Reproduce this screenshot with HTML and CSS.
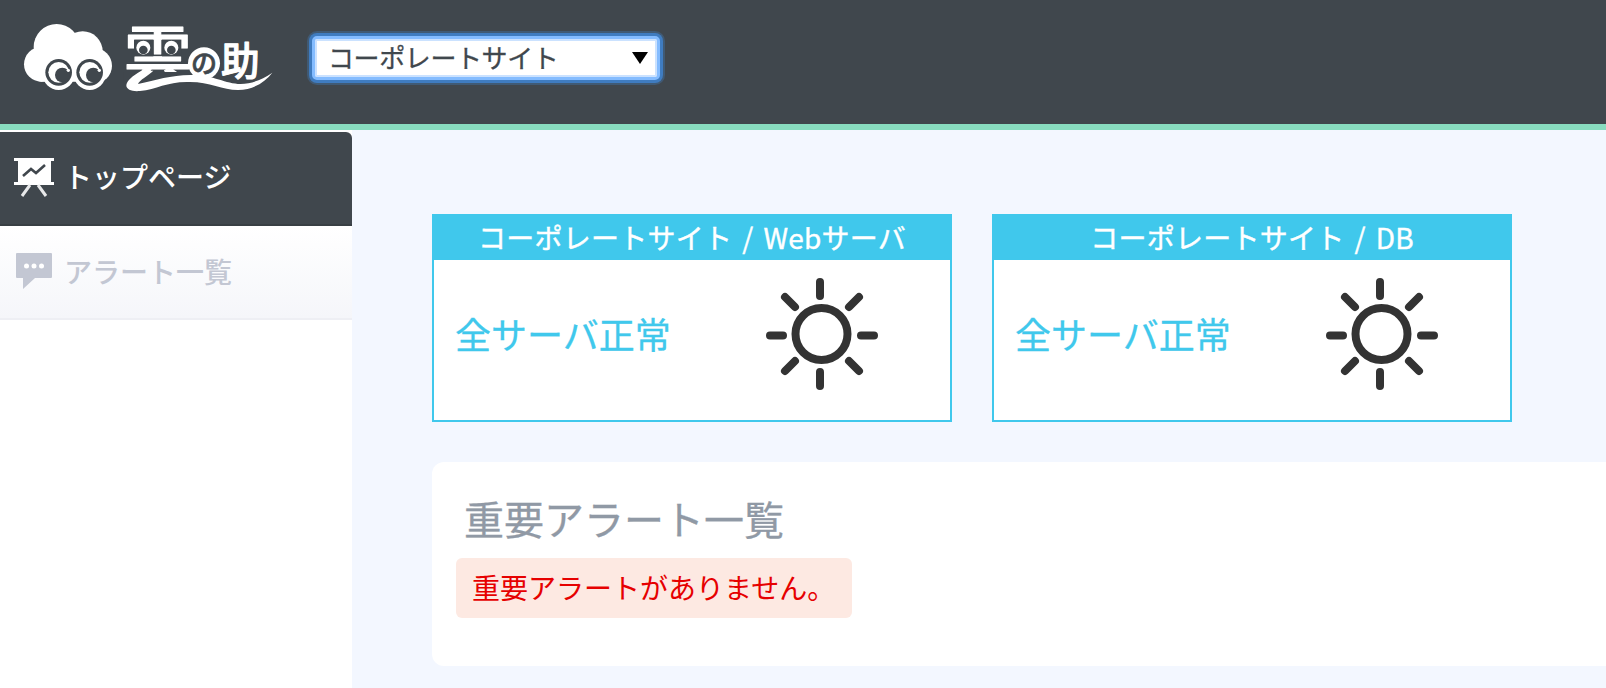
FILE: index.html
```html
<!DOCTYPE html>
<html lang="ja">
<head>
<meta charset="utf-8">
<title>雲の助</title>
<link rel="stylesheet" href="styles.css">
</head>
<body>
<header class="header">
  <svg class="logo" viewBox="0 0 900 372" role="img" aria-label="雲の助">
    <g fill="#fff">
      <circle cx="170" cy="141" r="69"/>
      <circle cx="248" cy="154" r="60"/>
      <circle cx="124" cy="193" r="52"/>
      <circle cx="283" cy="197" r="53"/>
      <rect x="104" y="150" width="170" height="95" rx="20"/>
      <circle cx="176" cy="222" r="48"/>
      <circle cx="269" cy="222" r="48"/>
    </g>
    <g id="eye">
      <circle cx="176" cy="217" r="40" fill="#40474d"/>
      <circle cx="176" cy="217" r="31" fill="#fff"/>
      <circle cx="187" cy="225" r="22" fill="#40474d"/>
      <circle cx="205" cy="211" r="5" fill="#fff"/>
    </g>
    <use href="#eye" x="93"/>
    <text class="logo-text" x="371" y="227" font-size="180" textLength="204" lengthAdjust="spacingAndGlyphs">雲</text>
    <g fill="#40474d">
      <rect x="402" y="119" width="58" height="50"/>
      <rect x="486" y="119" width="58" height="50"/>
      <rect x="370" y="216" width="206" height="34"/>
    </g>
    <g fill="#fff"><circle cx="430" cy="143" r="21"/><circle cx="514" cy="143" r="21"/></g>
    <g fill="#40474d"><circle cx="430" cy="150" r="13"/><circle cx="514" cy="150" r="13"/></g>
    <circle cx="612" cy="190" r="48" fill="#fff"/>
    <text class="logo-text logo-no" x="573" y="220" font-size="78">の</text>
    <text class="logo-text" x="663" y="226" font-size="116">助</text>
    <path fill="#fff" d="M424 212 C396 228 380 243 379 256 C379 270 397 275 420 273 C470 268 500 246 560 246 C625 243 665 270 714 270 C760 270 795 246 817 218 C785 240 755 251 722 252 C676 252 640 224 572 225 C510 226 470 240 414 252 C418 240 446 226 460 212 Z"/>
  </svg>
  <div class="site-select">
    <span>コーポレートサイト</span>
    <svg class="caret" viewBox="0 0 16 12"><path d="M0 0H16L8 12Z"/></svg>
  </div>
</header>
<div class="layout">
  <nav class="sidebar">
    <a class="nav-item nav-active">
      <svg class="nav-icon" viewBox="0 0 40 40">
        <path fill="#fff" d="M0 1h40v3h-3v21h3v3H0v-3h4V4H0z"/>
        <path fill="none" stroke="#40474d" stroke-width="2.6" d="M9 19L17 12L22 16L31 8"/>
        <path fill="none" stroke="#e8e9ea" stroke-width="3" d="M16 28L8 39M24 28L32 39"/>
      </svg>
      <span>トップページ</span>
    </a>
    <a class="nav-item">
      <svg class="nav-icon" viewBox="0 0 40 40">
        <path fill="#c3c7d3" d="M3 2h34a1 1 0 0 1 1 1v23a1 1 0 0 1-1 1H21L9 38V27H3a1 1 0 0 1-1-1V3a1 1 0 0 1 1-1z"/>
        <g fill="#fff"><circle cx="12.500" cy="15" r="2.500"/><circle cx="20" cy="15" r="2.500"/><circle cx="27.500" cy="15" r="2.500"/></g>
      </svg>
      <span>アラート一覧</span>
    </a>
  </nav>
  <main class="main">
    <div class="cards">
      <section class="card">
        <h2 class="card-title">コーポレートサイト / Webサーバ</h2>
        <div class="card-body">
          <span class="status">全サーバ正常</span>
          <svg class="sun" viewBox="0 0 112 112"><circle cx="55.500" cy="56" r="26"/><path d="M54 4V18M54 94V108M4 57.500H17M95 57.500H108M19 19L29 29M93 19L83 29M19 93L29 83M93 93L83 83"/></svg>
        </div>
      </section>
      <section class="card">
        <h2 class="card-title">コーポレートサイト / DB</h2>
        <div class="card-body">
          <span class="status">全サーバ正常</span>
          <svg class="sun" viewBox="0 0 112 112"><circle cx="55.500" cy="56" r="26"/><path d="M54 4V18M54 94V108M4 57.500H17M95 57.500H108M19 19L29 29M93 19L83 29M19 93L29 83M93 93L83 83"/></svg>
        </div>
      </section>
    </div>
    <section class="panel">
      <h1 class="panel-title">重要アラート一覧</h1>
      <p class="notice">重要アラートがありません。</p>
    </section>
  </main>
</div>
</body>
</html>
```
FILE: styles.css
```css
* { box-sizing: border-box; }

body {
  margin: 0;
  height: 688px;
  overflow: hidden;
  display: flex;
  flex-direction: column;
  background: #f3f7ff;
  font-family: "Noto Sans CJK JP", sans-serif;
}

.header {
  flex: none;
  height: 130px;
  display: flex;
  align-items: flex-start;
  background: #40474d;
  border-bottom: 6px solid #88dcbf;
}

.logo { width: 300px; height: 124px; }

.logo-text {
  fill: #fff;
  stroke: #fff;
  stroke-width: 3;
  stroke-linejoin: round;
  font-weight: 500;
}

.logo-no { fill: #40474d; stroke: #40474d; stroke-width: 2; }

.site-select {
  width: 348px;
  height: 44px;
  margin: 36px 0 0 12px;
  padding: 0 9px 2px 13px;
  display: flex;
  align-items: center;
  justify-content: space-between;
  background: #fff;
  border: 3px solid #84bcff;
  border-radius: 5px;
  box-shadow: inset 0 0 0 2px #cbe2ff, 0 0 0 3px #3f7cc0, 0 0 0 5px #405a74;
  color: #40474d;
  font-size: 26px;
  letter-spacing: -0.4px;
  line-height: 36px;
  -webkit-text-stroke: 0.3px currentColor;
}

.caret { width: 16px; height: 12px; margin-top: 2px; }

.layout { flex: 1; display: flex; min-height: 0; }

.sidebar {
  flex: none;
  width: 352px;
  padding-top: 2px;
  background: #fff;
}

.nav-item {
  height: 94px;
  padding: 0 14px 2px;
  display: flex;
  align-items: center;
  gap: 10px;
  background: linear-gradient(#fff, #f5f6fa);
  border-bottom: 2px solid #eeeff4;
  color: #c3c7d3;
  font-size: 28px;
  font-weight: 500;
}

.nav-active {
  background: #40474d;
  border-bottom-color: #383f44;
  border-top-right-radius: 6px;
  color: #fff;
}

.nav-active span { padding-bottom: 2px; }

.nav-icon { width: 40px; height: 40px; }

.main { flex: 1; min-width: 0; padding: 84px 0 0 80px; }

.cards { display: flex; gap: 40px; }

.card {
  width: 520px;
  height: 208px;
  background: #fff;
  border: 2px solid #40c8ec;
}

.card-title {
  height: 44px;
  margin: 0;
  background: #40c8ec;
  color: #fff;
  font-size: 28px;
  font-weight: 400;
  letter-spacing: 0.25px;
  word-spacing: 3.5px;
  line-height: 42px;
  text-align: center;
  -webkit-text-stroke: 0.4px currentColor;
}

.card-body {
  padding: 18px 72px 0 21px;
  display: flex;
  align-items: center;
  justify-content: space-between;
}

.status {
  padding-bottom: 2px;
  color: #40c8ec;
  font-size: 36px;
  line-height: 52px;
  -webkit-text-stroke: 0.3px currentColor;
}

.sun {
  width: 112px;
  height: 112px;
  fill: none;
  stroke: #333;
  stroke-width: 8;
  stroke-linecap: round;
}

.panel {
  height: 204px;
  margin-top: 40px;
  padding: 24px;
  background: #fff;
  border-radius: 12px 0 0 12px;
}

.panel-title {
  height: 72px;
  margin: 0;
  padding-left: 8px;
  color: #9099a5;
  font-size: 40px;
  font-weight: 400;
  line-height: 64px;
  -webkit-text-stroke: 0.3px currentColor;
}

.notice {
  width: 396px;
  height: 60px;
  margin: 0;
  padding-left: 16px;
  background: #fde9e2;
  border-radius: 6px;
  color: #e60000;
  font-size: 28px;
  line-height: 58px;
}
```
